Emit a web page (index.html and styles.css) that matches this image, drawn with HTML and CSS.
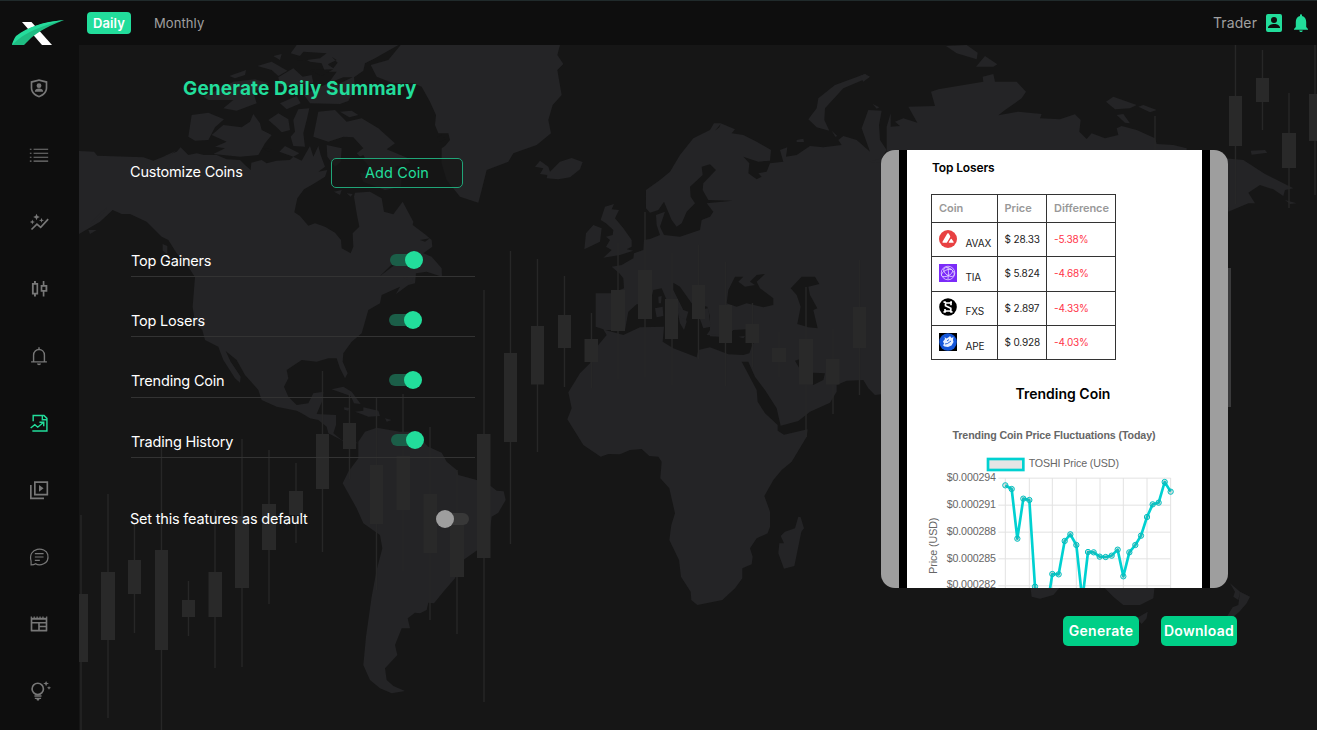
FILE: index.html
```html
<!DOCTYPE html>
<html lang="en">
<head>
<meta charset="utf-8">
<title>Daily Summary</title>
<link rel="stylesheet" href="styles.css">
</head>
<body>
<svg class="backdrop" width="1317" height="730" viewBox="0 0 1317 730" aria-hidden="true">
  <!-- Americas -->
  <g class="land" transform="translate(80 40) scale(.33333)">
    <path d="M-3 333L42 335L52 347L190 352L220 362L250 350L290 335L302 322L325 345L350 340L372 345L410 345L440 358L480 360L495 375L512 390L514 368L545 360L560 370L590 362L630 360L640 350L665 362L690 318L700 350L715 318L722 345L735 380L715 395L742 390L735 410L700 432L672 448L652 475L643 517L660 528L685 557L705 550L735 560L765 578L783 600L785 625L812 640L820 620L818 580L838 560L830 520L822 470L825 458L870 455L905 475L912 515L940 523L968 485L1000 545L998 555L1035 583L1055 600L1057 620L1030 640L1055 650L1085 685L1086 710L1040 695L1008 700L1005 730L985 735L948 762L960 740L905 765L900 790L865 810L845 880L815 905L790 940L788 965L803 1000L795 1015L780 985L770 955L745 955L710 965L665 960L620 990L625 1015L612 1040L625 1070L650 1095L685 1090L700 1060L730 1055L728 1080L715 1110L710 1122L768 1125L768 1155L760 1180L785 1200L810 1200L835 1210L800 1208L745 1180L740 1160L715 1140L690 1135L665 1120L650 1112L590 1100L545 1080L535 1050L495 1005L470 960L437 933L452 965L482 1010L480 1028L465 1015L430 960L415 920L375 900L367 870L345 850L338 800L345 712L325 680L290 640L265 600L245 590L200 545L150 522L125 522L98 510L60 545L-3 582Z"/>
    <path d="M962 15L925 60L872 75L890 110L940 130L1000 130L1025 140L1050 185L1068 225L1065 255L1075 280L1105 280L1110 300L1095 318L1085 325L1085 370L1100 420L1140 470L1195 488L1205 450L1220 390L1285 365L1300 340L1370 315L1413 280L1405 240L1418 195L1445 165L1438 125L1432 90L1450 72L1432 45L1440 15Z"/>
    <path d="M715 215L765 210L800 245L845 235L895 265L945 310L920 328L985 355L990 368L945 380L965 410L962 440L915 450L850 425L840 400L880 400L860 370L830 340L850 325L820 292L790 290L745 305L700 290ZM640 240L655 208L688 205L680 240L670 280L675 320L640 318L632 290L645 275ZM395 285L430 255L485 262L510 245L520 222L540 250L545 270L575 285L555 310L535 345L480 350L400 342L435 325L405 320L440 305ZM335 225L385 218L432 238L405 262L385 300L345 302L325 290ZM565 240L595 220L625 238L630 270L605 277L590 262ZM598 335L615 318L658 340L640 350ZM632 40L650 15L955 15L885 55L855 70L850 92L822 112L825 145L805 183L780 192L690 190L672 165L700 150L745 130L770 95L735 95L725 70L690 65L660 48ZM532 78L575 65L622 92L595 108L575 90ZM580 48L605 42L600 60ZM448 108L498 90L495 105L465 115ZM595 112L640 85L668 110L695 105L700 128L640 140L600 138ZM425 145L460 125L525 118L565 130L520 158L530 190L470 212L430 205L460 180L385 180L370 170ZM600 190L650 168L662 190L620 208ZM780 215L815 212L835 225L808 232ZM740 315L785 325L782 365L765 380L742 350ZM762 455L785 450L780 465ZM800 460L818 462L812 470ZM55 525L82 502L70 520L30 558L35 545ZM25 570L50 570L30 582ZM248 612L262 618L262 642L248 632ZM250 350L288 332L270 346ZM970 712L1000 710L995 728ZM755 1048L790 1040L815 1055L842 1092L822 1090L812 1068ZM850 1102L895 1112L900 1128L865 1130L850 1124L825 1115L850 1112ZM792 1102L808 1104L805 1112L793 1109ZM915 1135L935 1140L920 1145Z"/>
    <path class="water" d="M745 72L770 60L755 50L773 68L760 85L745 75ZM650 60L670 35L740 40L720 55L665 62ZM900 708L940 668L1000 668L985 678L940 678ZM1020 600L1050 595L1035 605ZM1072 292L1085 284L1097 298L1080 306ZM548 325L575 328L565 335ZM745 130L790 112L818 112L780 130L765 160L780 135ZM838 350L850 345L855 355L843 360ZM690 90L760 88L725 108Z"/>
  </g>
  <path class="land" transform="translate(80 330) scale(.33333)" d="M835 335L855 305L890 293L960 305L1000 305L1045 350L1085 368L1100 395L1130 420L1135 435L1190 450L1232 468L1250 482L1271 484L1277 510L1255 548L1235 560L1230 600L1200 655L1150 690L1125 745L1090 785L1062 820L1045 818L1040 840L1020 850L1005 848L983 865L990 895L965 895L945 945L952 975L915 1015L920 1050L940 1068L975 1083L935 1090L900 1075L870 1050L850 1005L858 920L875 800L890 720L907 655L900 615L850 580L830 535L788 460L805 425L835 385Z"/>
  <!-- Europe, Africa and western Asia -->
  <g class="land" transform="translate(480 40) scale(.33333)">
    <path d="M347 760L395 760L432 745L430 715L418 700L395 680L425 675L460 655L462 640L490 630L492 600L510 597L540 585L530 555L528 525L555 515L540 560L552 585L600 590L660 570L665 540L690 530L700 515L680 490L758 482L685 480L668 450L670 430L708 390L690 373L665 380L668 405L630 440L632 470L645 490L620 515L605 550L590 560L575 540L552 485L535 510L510 518L498 505L498 450L540 420L570 395L600 345L640 295L690 270L702 250L722 250L765 268L755 280L790 285L830 305L873 330L870 362L835 365L790 350L808 370L805 400L830 418L845 410L835 400L860 395L870 370L910 365L900 330L922 322L918 350L950 345L990 318L1030 322L1085 315L1075 300L1090 288L1130 300L1170 335L1145 265L1165 210L1205 212L1197 255L1200 300L1220 330L1205 355L1210 1062L1185 1065L1165 1045L1150 1020L1100 1022L1070 1035L1070 1055L1050 1088L990 1115L955 1143L902 1157L890 1105L855 1050L825 1010L805 965L785 965L830 1050L833 1085L855 1120L893 1155L893 1172L912 1184L983 1168L980 1190L935 1265L905 1290L880 1320L853 1368L870 1415L870 1460L863 1480L830 1495L810 1525L818 1550L815 1573L787 1585L787 1615L765 1645L727 1680L652 1695L634 1680L632 1655L603 1610L597 1560L568 1500L574 1455L585 1420L568 1345L541 1315L545 1265L535 1250L508 1248L485 1227L450 1230L420 1243L385 1242L362 1250L310 1215L262 1138L275 1105L265 1057L300 1000L330 970L355 915L380 885L370 868L347 860Z"/>
    <path class="water" d="M375 870L435 870L445 815L470 793L510 790L520 750L545 745L560 780L590 800L600 850L612 870L620 845L610 810L580 750L580 728L600 740L635 790L682 800L690 830L690 870L680 885L740 890L760 870L800 868L835 900L818 912L808 940L790 945L745 943L690 922L655 930L650 952L580 925L548 905L552 860L480 862L430 885ZM740 790L745 750L765 710L790 710L775 725L795 740L825 735L810 725L830 705L855 702L830 725L840 745L880 775L880 795L850 802L800 790L770 800ZM932 745L965 710L1005 710L1018 732L985 740L990 765L1012 805L1000 810L1013 865L985 862L952 852L962 800L950 765ZM945 962L958 958L965 990L1000 998L1035 1000L1030 1020L1000 1035L970 1005ZM705 272L722 252L718 262Z"/>
    <path d="M525 805L548 800L550 828L530 832ZM535 770L545 768L543 790L536 790ZM595 805L625 815L618 840L600 830ZM690 885L720 884L718 890L690 889ZM775 890L795 888L790 895ZM650 810L685 805L692 860L670 865ZM165 380L180 362L205 380L210 395L240 365L275 354L308 366L300 388L270 412L235 418L200 415L202 405L180 402L190 385ZM362 540L375 500L402 492L395 508L417 510L405 535L430 565L455 600L455 620L440 628L460 632L420 645L370 653L395 630L378 620L390 600L378 590L398 585L400 570L378 550ZM313 628L318 580L340 555L365 565L360 605ZM985 238L1010 205L1015 175L1065 135L1155 102L1168 112L1090 145L1035 205L1033 240L1048 272L1010 262ZM950 300L970 296L972 306L950 306ZM1055 272L1072 288L1066 290ZM1178 192L1198 202L1190 206ZM895 1540L898 1510L912 1510L902 1488L915 1475L945 1465L955 1430L962 1432L972 1465L964 1475L943 1578L912 1586Z"/>
  </g>
  <!-- Northern Asia -->
  <g class="land" transform="translate(860 30) scale(.33333)">
    <path d="M80 290L92 250L92 290L120 288L105 275L130 265L172 278L145 230L225 228L213 185L235 178L370 155L368 140L400 132L405 155L470 155L498 185L485 205L435 240L415 256L475 245L545 252L540 265L600 268L645 253L662 270L658 305L680 327L695 310L735 325L775 315L770 295L785 288L830 300L885 325L890 342L940 345L980 355L980 500L60 500L65 400L28 395L65 385L80 365ZM258 48L320 45L353 68L350 88L290 70ZM348 110L375 78L412 103L400 110ZM0 138L15 132L30 140L10 155ZM738 215L760 200L830 225L810 235L765 238ZM835 230L850 225L890 240L870 247ZM770 255L790 252L810 280L795 278ZM1172 362L1215 360L1222 368L1175 374ZM1095 385L1150 390L1215 432L1300 475L1275 480L1270 498L1240 478L1200 465L1165 488L1185 520L1165 520L1105 545ZM1275 510L1310 520L1290 522Z"/>
  </g>
  <!-- Oceania -->
  <path class="land" transform="translate(870 370) scale(.33333)" d="M480 640L580 640L550 675L510 686L485 680ZM690 640L855 640L850 685L810 705L760 705L730 680ZM800 745L833 725L830 745L815 762ZM1080 640L1110 665L1105 690L1090 680L1095 665ZM1110 665L1140 680L1130 700L1108 725L1090 740L1072 738L1088 712L1105 705Z"/>
  <g class="candles">
    <path class="wicks" d="M81 515V730M108 494V718M134.500 522V633M161.500 445V730M188.500 581V636M215 510V668M242 439V667M269 450V604M296 463V543M322.500 371V552M349.500 394V479M376.500 398V590M403 394V571M430 427V620M457 470V634M484 290V702M510.500 251V544M537.500 259V452M564.500 276V387M591.500 313V388M618 243V379M645 212V377M672 253V385M698.500 245V359M725.500 262V386M752.500 303V367M779 332V377M806 287V437M833 329V414M859.500 260V395M1155 116V150M1235.500 45V204M1262.500 50V130M1289 93V208M1315 45V195"/>
    <path d="M79 594h9v68h-9zM101 572h14v68h-14zM128 560h13v34h-13zM155 550h13v100h-13zM182 600h13v17h-13zM208.500 572h13.500v45h-13.500zM235 516h14v72h-14zM262 504h14v46h-14zM289 491h14v24h-14zM316 434h13v55h-13zM343 423h13v26h-13zM370 465h13v59h-13zM396.500 456h13.500v54h-13.500zM423.500 494h13.500v59h-13.500zM450 519h14v58h-14zM477 434h13.500v124h-13.500zM504 353h13v89h-13zM531 326h13v58.500h-13zM558 315h13v33h-13zM584.500 339h13.500v23h-13.500zM611 290h14v41h-14zM638 270h14v49h-14zM665 299h13v40h-13zM692 285h13v34h-13zM719 305h13v38h-13zM745.500 324h13.500v19h-13.500zM772 348h14v14h-14zM799 339h14v45.500h-14zM826 359h13.500v25.500h-13.500zM853 307h13v41h-13zM1229 96h13v50h-13zM1256 78h13v24h-13zM1282 133h14v35h-14zM1309 94h8v47h-8z"/>
    <path class="edge" d="M1226 268h5v139h-5z"/>
  </g>
</svg>

<div class="app">
  <nav class="sidebar">
    <svg class="logo" width="53" height="26" viewBox="0 0 53 26"><path fill="#fff" d="M10 2h9.500L40 25H30z"/><path fill="#1fbd83" d="M0 25C4 13 22 3 52 0 39 5 27 11 19 18l-7 7z"/><path fill="#25dc9c" d="M0 25C1 21 2 19 4 16 16 7 30 2 52 0 32 5 12 12 0 25z"/></svg>
    <div class="nav-list">
      <svg class="icon" viewBox="0 0 24 24"><path d="M12 1.500 2 4v8c0 5 4 9.500 10 11.500 6-2 10-6.500 10-11.500V4zM12 3.700l8 2V12c0 3.800-3.200 7.500-8 9.300-4.800-1.800-8-5.500-8-9.300V5.700z" fill-rule="evenodd"/><circle cx="12" cy="9.200" r="2.900"/><path d="M7 16.500c0-2.700 2.200-4 5-4s5 1.300 5 4z"/></svg>
      <svg class="icon" viewBox="0 0 24 24"><path d="M1 4.500h2v1.300H1zM5.500 4.500H23v1.300H5.500zM1 9.200h2v1.300H1zM5.500 9.200H23v1.300H5.500zM1 14h2v1.300H1zM5.500 14H23v1.300H5.500zM1 18.700h2V20H1zM5.500 18.700H23V20H5.500z"/></svg>
      <svg class="icon" viewBox="0 0 24 24"><path d="M9 2l1.200 2.800L13 6l-2.800 1.200L9 10 7.800 7.200 5 6l2.800-1.200zM4 9l.8 2.200L7 12l-2.200.8L4 15l-.8-2.200L1 12l2.200-.8zM15 7l.8 2.200 2.200.8-2.200.8L15 13l-.8-2.200L12 10l2.200-.8z"/><path class="stroke" d="M3 21l6.500-6.500 4.500 4L23 8.500"/></svg>
      <svg class="icon" viewBox="0 0 24 24"><path d="M6 2.500h2.300v2.200H11v14H8.300V21H6v-2.300H3.500v-14H6zm-.3 4.300v9.700H9V6.800zM16.500 2.500h2v4.700H22v8h-3.500V21h-2v-5.800H14v-8h2.500zm-.5 6.800v4h3.800v-4z" fill-rule="evenodd"/></svg>
      <svg class="icon" viewBox="0 0 24 24"><path class="stroke thin" d="M2.500 19h19M5.500 19V11c0-9 13-9 13 0v8M12 1.500v3"/><path d="M9.500 21h5c-.5 2.600-4.500 2.600-5 0z"/></svg>
      <svg class="icon active" viewBox="0 0 24 24"><path class="stroke thin" d="M5 10V3h13l3.500 3.500v15H4M16 3v5h5M2 18l5-4 3.500 3 7-6M12.500 11h5.200v5"/></svg>
      <svg class="icon" viewBox="0 0 24 24"><path class="stroke" d="M7 2.500h15v15H7zM2.200 6v16H18"/><path d="M12 6v8l5.500-4z"/></svg>
      <svg class="icon" viewBox="0 0 24 24"><path class="stroke fine" d="M2.500 21.500V17C-2 0 20-1 22.500 9 25 21 12 23 8 20q-2 1.500-5.500 1.500zM7 8h10.500M7 12h10.500M7 16h6"/></svg>
      <svg class="icon" viewBox="0 0 24 24"><path d="M2 3h1.500v1.500h2V3H7v1.500h2V3h1.500v1.500h2V3H14v1.500h2V3h1.500v1.500h3V3H22v17q0 1-1 1H3q-1 0-1-1zm2 4v2.500h16V7zm0 4.500V19h7v-7.500zm9 0V14h7v-2.500zm0 4.500v3h7v-3z" fill-rule="evenodd"/></svg>
      <svg class="icon" viewBox="0 0 24 24"><circle class="stroke" cx="10.500" cy="9.500" r="6.800"/><path d="M6.500 17h8.500v1.800H6.500zM7 20h7.500v1.500h-2L12 23.500H9.500L9 21.500H7zM20.500 0l1 2.200 2.500.8-2.500 1-1 2.300-1-2.300-2.500-1 2.500-.8zM24 6l.7 1.500 1.800.7-1.800.7-.7 1.600-.7-1.600-1.800-.7 1.800-.7z"/></svg>
    </div>
  </nav>

  <header class="topbar">
    <div class="tabs"><span class="tab selected">Daily</span><span class="tab">Monthly</span></div>
    <div class="account">
      <span>Trader</span>
      <svg width="16" height="18" viewBox="0 0 16 18"><path fill-rule="evenodd" d="M2 0h12q2 0 2 2v14q0 2-2 2H2q-2 0-2-2V2q0-2 2-2zm6 3a3 3 0 100 6 3 3 0 000-6zM2 14h12v-.8C13 10.500 10 10 8 10s-5 .5-6 3.200z"/></svg>
      <svg width="14" height="18" viewBox="0 0 14 18"><path d="M6 2c-.3-2.500 2.300-2.500 2 0 3 .8 4.200 3 4.200 6v5L14 15v.8H0V15l1.800-2V8c0-3 1.200-5.200 4.200-6zM5.200 16.500h3.600c-.5 2-3.100 2-3.600 0z"/></svg>
    </div>
  </header>

  <main class="content">
    <section class="settings">
      <h1>Generate Daily Summary</h1>
      <div class="customize"><span>Customize Coins</span><button class="add">Add Coin</button></div>
      <div class="options">
        <div class="option gainers"><span>Top Gainers</span><i class="switch on"></i></div>
        <div class="option losers"><span>Top Losers</span><i class="switch on"></i></div>
        <div class="option trending"><span>Trending Coin</span><i class="switch on"></i></div>
        <div class="option history"><span>Trading History</span><i class="switch on"></i></div>
      </div>
      <div class="default"><span>Set this features as default</span><i class="switch"></i></div>
    </section>

    <section class="preview">
      <div class="device"><div class="page">
        <h2>Top Losers</h2>
        <table>
          <tr><th>Coin</th><th>Price</th><th>Difference</th></tr>
          <tr><td><div class="coin"><svg viewBox="0 0 18 18"><circle cx="9" cy="9" r="9" fill="#e84142"/><path fill="#fff" d="M8.300 3.600q.7-.9 1.400 0l1.400 2.500q.3.600 0 1.200l-3 5q-.3.500-1 .5H4q-.9-.2-.5-1zM11.700 9q.5-.6 1 0l2 3q.2.700-.5.800h-4q-.8-.2-.4-.9z"/></svg>AVAX</div></td><td>$ 28.33</td><td class="loss">-5.38%</td></tr>
          <tr><td><div class="coin"><svg viewBox="0 0 18 18"><path fill="#7b2bf9" d="M0 0h18v18H0z"/><g fill="none" stroke="#e5d5ff" stroke-width=".8"><circle cx="9" cy="9" r="6.800"/><ellipse cx="10" cy="8" rx="6" ry="3.500" transform="rotate(35 10 8)"/><ellipse cx="8" cy="9" rx="6" ry="3" transform="rotate(-25 8 9)"/><path d="M9 3q1 6 0 12"/></g></svg>TIA</div></td><td>$ 5.824</td><td class="loss">-4.68%</td></tr>
          <tr><td><div class="coin"><svg viewBox="0 0 18 18"><circle cx="9" cy="9" r="8.800"/><path fill="none" stroke="#fff" stroke-width="1.700" d="M4.500 4.200h1.700l.8.800h4l.8-.8H13M12 5v2.200M6.500 5.500v2.300l5.300 2.400v3M4.500 13.800h1.700l.8-.8h4l.8.800H13.500M6 13v-2"/></svg>FXS</div></td><td>$ 2.897</td><td class="loss">-4.33%</td></tr>
          <tr><td><div class="coin"><svg viewBox="0 0 18 18"><path d="M0 0h18v18H0z"/><circle cx="9" cy="9" r="8.800" fill="#1456d9"/><path fill="#e8f0ff" d="M4 8.500l2-2.500-.5-2 2 1.500L10 4l1-1 1.500 2 2-1-.5 3 .5 2-2 3.500-3.500 1.500-3.500-.5L3.800 12l1.400-1z"/><path fill="none" stroke="#1456d9" stroke-width=".9" d="M8 8l2-1.500M6 11l2.500-.5L12 8"/></svg>APE</div></td><td>$ 0.928</td><td class="loss">-4.03%</td></tr>
        </table>
        <h3>Trending Coin</h3>
        <svg class="chart" width="295" height="173" viewBox="111 135 885 519">
          <path class="grid" d="M385 324.500H902M385 405.500H902M385 486.500H902M385 566.500H902M385 647.500H902M406 324V660M478 324V660M547 324V660M619 324V660M690 324V660M760 324V660M831 324V660M902 324V660"/>
          <text class="title" x="552" y="206" text-anchor="middle" textLength="609">Trending Coin Price Fluctuations (Today)</text>
          <rect x="354" y="267" width="106" height="33" fill="#e5e5e5" stroke="#00d1d1" stroke-width="8"/>
          <text x="476" y="292" textLength="271">TOSHI Price (USD)</text>
          <text x="230" y="334" textLength="148">$0.000294</text><text x="230" y="415" textLength="148">$0.000291</text><text x="230" y="495" textLength="148">$0.000288</text><text x="230" y="576" textLength="148">$0.000285</text><text x="230" y="655" textLength="148">$0.000282</text>
          <text transform="translate(200 611) rotate(-90)" textLength="168">Price (USD)</text>
          <polyline class="line" points="406,346 425,357 442,506 460,386 478,390 495,650 512,760 530,720 547,612 566,613 584,513 601,493 619,525 637,690 654,546 671,547 689,560 707,561 725,557 743,539 760,619 778,547 796,525 813,497 831,441 848,403 866,398 884,336 902,365"/>
          <g class="dots"><circle cx="406" cy="346" r="8"/><circle cx="425" cy="357" r="8"/><circle cx="442" cy="506" r="8"/><circle cx="460" cy="386" r="8"/><circle cx="478" cy="390" r="8"/><circle cx="495" cy="650" r="8"/><circle cx="547" cy="612" r="8"/><circle cx="566" cy="613" r="8"/><circle cx="584" cy="513" r="8"/><circle cx="601" cy="493" r="8"/><circle cx="619" cy="525" r="8"/><circle cx="654" cy="546" r="8"/><circle cx="671" cy="547" r="8"/><circle cx="689" cy="560" r="8"/><circle cx="707" cy="561" r="8"/><circle cx="725" cy="557" r="8"/><circle cx="743" cy="539" r="8"/><circle cx="760" cy="619" r="8"/><circle cx="778" cy="547" r="8"/><circle cx="796" cy="525" r="8"/><circle cx="813" cy="497" r="8"/><circle cx="831" cy="441" r="8"/><circle cx="848" cy="403" r="8"/><circle cx="866" cy="398" r="8"/><circle cx="884" cy="336" r="8"/><circle cx="902" cy="365" r="8"/></g>
        </svg>
      </div></div>
      <div class="actions"><button>Generate</button><button>Download</button></div>
    </section>
  </main>
</div>
</body>
</html>
```
FILE: styles.css
```css
* { box-sizing: border-box; }
body {
  margin: 0;
  width: 1317px;
  height: 730px;
  overflow: hidden;
  background: #161616;
  color: #fff;
  font-family: Inter, sans-serif;
}
h1, h2, h3 { margin: 0; }
button { font-family: inherit; padding: 0; }
svg { display: block; flex: none; }

.backdrop { position: absolute; inset: 0; z-index: -1; }
.land { fill: #242426; }
.water { fill: #161616; }
.candles { fill: #292929; }
.wicks { stroke: #272727; stroke-width: 1.4; fill: none; }
.edge { fill: #3a3a3b; }

.app {
  display: grid;
  grid-template: 45px 685px / 79px 1238px;
}
.sidebar { grid-row: 1 / 3; background: #0e0e0e; border-top: 1px solid #202a2b; }
.logo { margin: 19px 0 0 12px; }
.nav-list { display: flex; flex-direction: column; align-items: center; gap: 47px; margin: 32px 1px 0 0; }
.icon { width: 20px; height: 20px; fill: #777; overflow: visible; }
.stroke { fill: none; stroke: #777; stroke-width: 2; }
.thin { stroke-width: 1.7; }
.fine { stroke-width: 1.4; }
.active .stroke { stroke: #22dd9b; }

.topbar {
  display: flex;
  justify-content: space-between;
  align-items: center;
  background: #0e0e0e;
  border-top: 1px solid #202a2b;
  padding: 0 9px 0 8px;
}
.tabs { display: flex; gap: 17px; font-size: 13px; letter-spacing: .1px; }
.tab { padding: 0 6px; line-height: 22px; color: #a0a0a0; }
.selected { background: #22dd9b; border-radius: 4px; color: #fff; font-weight: 600; letter-spacing: .1px; }
.account { display: flex; align-items: center; gap: 12px; color: #a0a0a0; font-size: 14px; letter-spacing: .1px; }
.account span { margin: -1px -3px 0 0; }
.account svg { fill: #22dd9b; }

.content { display: flex; justify-content: space-between; padding: 0 80px 0 51px; }
.settings { width: 345px; font-size: 14.500px; letter-spacing: -.2px; }
h1 { margin: 32px 0 0 53px; color: #22dd9b; font-size: 19px; letter-spacing: .14px; line-height: 24px; white-space: nowrap; }
.customize { display: flex; justify-content: space-between; margin: 57px 12px 0 0; line-height: 27px; }
.add {
  width: 132px;
  height: 30px;
  border: 1px solid #20a477;
  border-radius: 5px;
  background: #161616b0;
  color: #22dd9b;
  font-size: 14.500px;
  letter-spacing: .1px;
  padding-bottom: 1px;
}
.options { margin: 29px 0 0 1px; }
.option { display: flex; justify-content: space-between; height: 60.200px; padding-top: 30px; border-bottom: 1px solid #333; line-height: 27px; }
.switch { position: relative; width: 32px; height: 12px; margin-top: 7px; border-radius: 6px; background: #383838; }
.switch::before { content: ""; position: absolute; left: -1px; top: -3px; width: 18px; height: 18px; border-radius: 50%; background: #9e9e9e; }
.on { background: #1b5e48; }
.on::before { left: 15px; background: #22dd9b; }
.gainers .switch { margin-right: 53px; }
.losers .switch, .trending .switch { margin-right: 54px; }
.history .switch { margin-right: 52px; margin-top: 6px; }
.default { display: flex; justify-content: space-between; margin: 47px 6px 0 0; line-height: 28px; }
.default .switch { margin-top: 8px; }

.preview { width: 356px; padding-top: 105px; }
.device { width: 347px; height: 437.500px; padding: 0 18px; border-radius: 14px; background: #9e9e9e; overflow: hidden; }
.page { width: 311px; height: 437.500px; border: solid #000; border-width: 0 8px; background: #fff; color: #000; overflow: hidden; }
h2 { margin: 10px 0 18px 25px; font-size: 12px; line-height: 16px; font-weight: 600; letter-spacing: -.15px; }
table { width: 185px; margin-left: 24px; border-collapse: collapse; table-layout: fixed; font-size: 10px; letter-spacing: -.15px; color: #222; }
th, td { height: 34.300px; padding: 0 7px 1px; border: 1px solid #333; text-align: left; white-space: nowrap; }
th { height: 28px; color: #999; font-size: 11px; font-weight: 600; letter-spacing: -.05px; }
th:nth-child(1) { width: 65.500px; }
th:nth-child(2) { width: 49.500px; }
.coin { display: flex; align-items: flex-end; gap: 8.500px; line-height: 11px; }
.coin svg { width: 18px; height: 18px; margin-bottom: 1px; }
.loss { color: #ff3347; }
h3 { margin-top: 25px; padding-left: 17px; font-size: 14px; line-height: 18px; font-weight: 600; text-align: center; letter-spacing: 0; }
.chart { margin-top: 12px; font-family: "Liberation Sans", sans-serif; font-size: 32px; fill: #666; letter-spacing: normal; }
.title { font-weight: bold; }
.grid { fill: none; stroke: #e2e2e2; stroke-width: 3; }
.line { fill: none; stroke: #00d1d1; stroke-width: 8; stroke-linejoin: round; }
.dots { fill: #55777733; stroke: #00c2c2; stroke-width: 3; }

.actions { display: flex; justify-content: flex-end; gap: 22px; margin-top: 28px; }
.actions button { width: 76px; height: 30px; border: 0; border-radius: 5px; background: #00cf87; color: #fff; font-size: 14px; font-weight: 600; letter-spacing: .3px; line-height: 29px; padding-bottom: 1px; }
```
